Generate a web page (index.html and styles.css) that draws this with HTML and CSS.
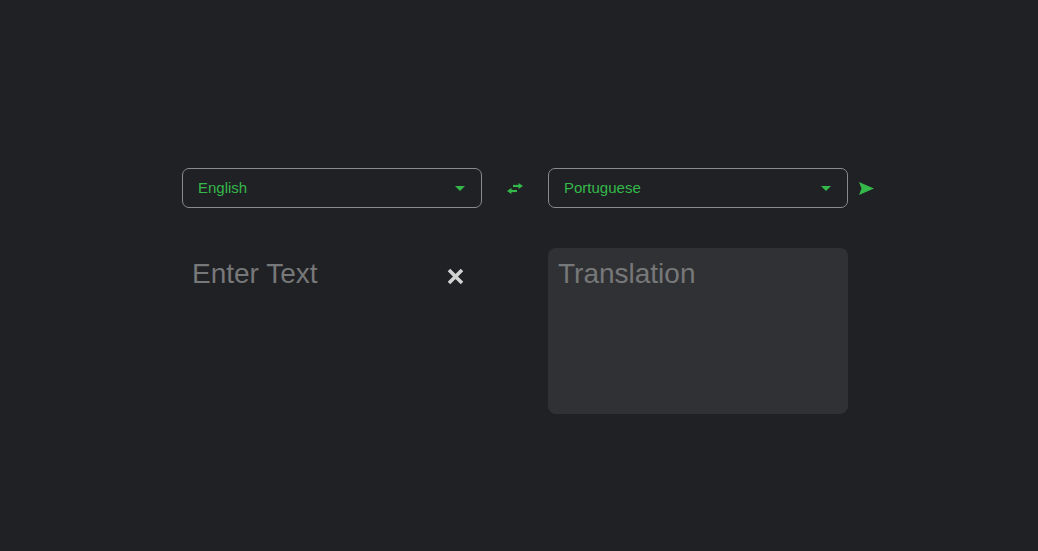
FILE: index.html
```html
<!DOCTYPE html>
<html lang="en">
<head>
<meta charset="utf-8">
<title>Translator</title>
<link rel="stylesheet" href="styles.css">
</head>
<body>
<main class="app">
  <div class="row">
    <div class="select">
      <span class="select-label">English</span>
      <span class="caret"></span>
    </div>
    <div class="swap">
      <svg width="16" height="11" viewBox="0 0 16 11">
        <path d="M6 3 H12.5" stroke="#34b84a" stroke-width="2.2" fill="none"/>
        <polygon points="11.5,0 16,3 11.5,6" fill="#34b84a"/>
        <path d="M3.5 8 H10" stroke="#34b84a" stroke-width="2.2" fill="none"/>
        <polygon points="4.5,5 0,8 4.5,11" fill="#34b84a"/>
      </svg>
    </div>
    <div class="select">
      <span class="select-label">Portuguese</span>
      <span class="caret"></span>
    </div>
    <div class="send">
      <svg width="15" height="13" viewBox="0 0 15 13">
        <polygon points="0,0 15,6.5 0,13 2.5,6.5" fill="#34b84a"/>
      </svg>
    </div>
  </div>
  <div class="row panes">
    <div class="input-pane">
      <textarea class="text-input" placeholder="Enter Text"></textarea>
      <div class="clear">
        <svg width="17" height="17" viewBox="0 0 17 17">
          <path d="M2 2 L15 15 M15 2 L2 15" stroke="#d2d2d2" stroke-width="3.6" stroke-linecap="butt" fill="none"/>
        </svg>
      </div>
    </div>
    <div class="gap"></div>
    <div class="output-pane">Translation</div>
  </div>
</main>
</body>
</html>
```

FILE: styles.css
```css
html, body {
  margin: 0;
  padding: 0;
}
body {
  background: #202124;
  min-height: 100vh;
  font-family: "Liberation Sans", Arial, sans-serif;
}
.app {
  padding: 168px 0 0 182px;
}
.row {
  display: flex;
  align-items: center;
}
.select {
  box-sizing: border-box;
  width: 300px;
  height: 40px;
  border: 1px solid #8a8a8c;
  border-radius: 7px;
  display: flex;
  align-items: center;
  justify-content: space-between;
  padding: 0 16px 2px 15px;
}
.select-label {
  color: #34b84a;
  font-size: 15px;
}
.caret {
  width: 0;
  height: 0;
  border-left: 5px solid transparent;
  border-right: 5px solid transparent;
  border-top: 5px solid #34b84a;
  margin-top: 2px;
}
.swap {
  width: 66px;
  display: flex;
  justify-content: center;
  align-items: center;
}
.swap svg, .send svg, .clear svg {
  display: block;
}
.send {
  margin-left: 11px;
  margin-top: 0;
}
.panes {
  margin-top: 40px;
  align-items: flex-start;
}
.input-pane {
  position: relative;
  width: 300px;
  height: 166px;
}
.text-input {
  box-sizing: border-box;
  width: 300px;
  height: 166px;
  background: transparent;
  border: none;
  outline: none;
  resize: none;
  padding: 10px 10px;
  margin: 0;
  font-family: "Liberation Sans", Arial, sans-serif;
  font-size: 28px;
  color: #e0e0e0;
  display: block;
}
.text-input::placeholder {
  color: #777879;
}
.clear {
  position: absolute;
  top: 20px;
  right: 18px;
}
.gap {
  width: 66px;
}
.output-pane {
  box-sizing: border-box;
  width: 300px;
  height: 166px;
  background: #303134;
  border-radius: 8px;
  padding: 10px 10px;
  font-size: 28px;
  color: #777879;
}
```
